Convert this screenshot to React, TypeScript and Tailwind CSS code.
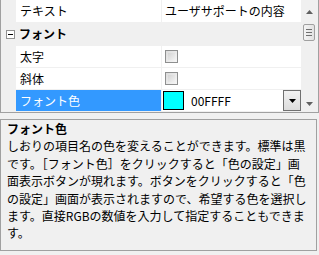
import React from "react";

const FONT = { fontFamily: '"Noto Sans CJK JP", "Noto Sans", sans-serif' };

function Checkbox() {
  return (
    <div className="w-[13px] h-[13px] border border-[#8e8f8f] bg-gradient-to-br from-[#dcdcdc] to-[#f6f6f6] p-[2px]">
      <div className="w-full h-full bg-gradient-to-br from-[#d4d4d4] to-[#f2f2f2]" />
    </div>
  );
}

function Row({
  label,
  children,
  selected = false,
  bold = false,
  category = false,
  minus = false,
  height = "h-[21px]",
}: {
  label: string;
  children?: React.ReactNode;
  selected?: boolean;
  bold?: boolean;
  category?: boolean;
  minus?: boolean;
  height?: string;
}) {
  return (
    <div className={`flex ${height} shrink-0`}>
      <div className="w-[15px] bg-[#f0f0f0] flex items-center justify-center shrink-0">
        {minus && (
          <div className="w-[9px] h-[9px] border border-[#919191] bg-white flex items-center justify-center ml-[3px]">
            <div className="w-[5px] h-px bg-black" />
          </div>
        )}
      </div>
      {category ? (
        <div className="flex-1 bg-[#f0f0f0] flex items-center pl-[3px] text-[12px] font-bold text-black">
          {label}
        </div>
      ) : (
        <>
          <div
            className={`w-[145px] shrink-0 flex items-center pl-[4px] text-[12px] ${
              selected ? "bg-[#3399ff] text-white" : "bg-white text-black"
            } ${bold ? "font-bold" : ""}`}
          >
            {label}
          </div>
          <div className="w-px bg-[#f0f0f0] shrink-0" />
          <div className="flex-1 bg-white flex items-center text-[12px] text-black">
            {children}
          </div>
        </>
      )}
    </div>
  );
}

function Sep() {
  return <div className="h-px bg-[#f0f0f0] shrink-0" />;
}

export default function App() {
  const lines = [
    "しおりの項目名の色を変えることができます。標準は黒",
    "です。［フォント色］をクリックすると「色の設定」画",
    "面表示ボタンが現れます。ボタンをクリックすると「色",
    "の設定」画面が表示されますので、希望する色を選択し",
    "ます。直接RGBの数値を入力して指定することもできま",
    "す。",
  ];
  return (
    <div
      className="w-[319px] h-[255px] bg-[#f0f0f0] overflow-hidden flex flex-col"
      style={FONT}
    >
      <div className="h-[113px] shrink-0 border-l border-r border-b border-[#a0a0a0] flex">
        <div className="flex-1 flex flex-col bg-[#f0f0f0]">
          <Row label="テキスト" height="h-[22px]">
            <span className="pl-[3px]">ユーザサポートの内容</span>
          </Row>
          <Sep />
          <Row label="フォント" category minus height="h-[22px]" />
          <Sep />
          <Row label="太字">
            <div className="pl-[3px]">
              <Checkbox />
            </div>
          </Row>
          <Sep />
          <Row label="斜体">
            <div className="pl-[3px]">
              <Checkbox />
            </div>
          </Row>
          <Sep />
          <Row label="フォント色" selected>
            <div className="flex items-center w-full h-full pl-[1px]">
              <div className="w-[21px] h-[19px] border border-black bg-[#00ffff] shrink-0" />
              <span className="ml-[7px] flex-1">00FFFF</span>
              <div className="w-[18px] h-[21px] border border-[#707070] bg-gradient-to-b from-[#f2f2f2] to-[#dcdcdc] flex items-center justify-center">
                <svg width="7" height="4" viewBox="0 0 7 4">
                  <path d="M0 0H7L3.5 4Z" fill="#000" />
                </svg>
              </div>
            </div>
          </Row>
        </div>
        <div className="w-[17px] shrink-0 bg-[#f0f0f0] flex flex-col items-center">
          <div className="h-[24px] w-full flex items-center justify-center">
            <svg width="7" height="4" viewBox="0 0 7 4">
              <path d="M0 4H7L3.5 0Z" fill="#606060" />
            </svg>
          </div>
          <div className="w-[12px] h-[17px] mr-[2px] border border-[#a0a0a0] rounded-[2px] bg-gradient-to-r from-[#f4f4f4] to-[#e2e2e2] flex flex-col items-center justify-center gap-[2px]">
            <div className="w-[6px] h-px bg-[#707070]" />
            <div className="w-[6px] h-px bg-[#707070]" />
            <div className="w-[6px] h-px bg-[#707070]" />
          </div>
          <div className="flex-1" />
          <div className="h-[17px] w-full flex items-center justify-center">
            <svg width="7" height="4" viewBox="0 0 7 4">
              <path d="M0 0H7L3.5 4Z" fill="#606060" />
            </svg>
          </div>
        </div>
      </div>
      <div className="h-[6px] shrink-0" />
      <div className="w-[317px] h-[132px] shrink-0 border border-[#a0a0a0] bg-[#f0f0f0] pl-[6px] text-[12px] leading-[17.4px] text-black">
        <div className="font-bold whitespace-nowrap">フォント色</div>
        {lines.map((l, i) => (
          <div key={i} className="whitespace-nowrap">
            {l}
          </div>
        ))}
      </div>
    </div>
  );
}
